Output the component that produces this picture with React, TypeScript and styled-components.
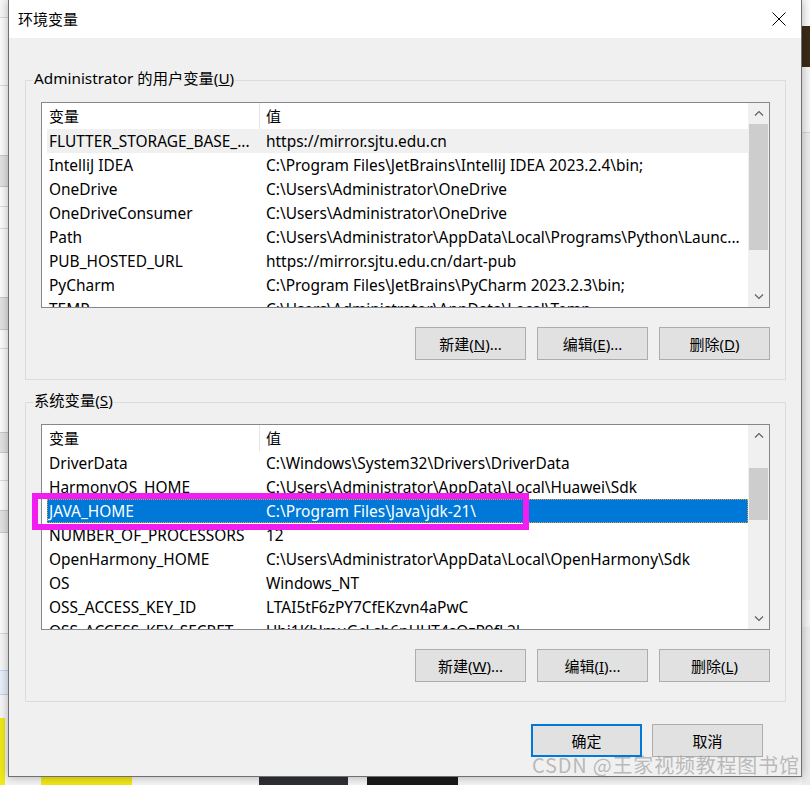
import React from "react";
import styled, { createGlobalStyle } from "styled-components";

const FONT = `"Noto Sans", "Noto Sans CJK SC", sans-serif`;

const GlobalStyle = createGlobalStyle`
  html, body { margin: 0; padding: 0; background: #f3f3f3; }
  body { font-family: ${FONT}; }
  * { box-sizing: border-box; }
`;

const Desktop = styled.div`
  position: relative;
  width: 810px;
  height: 785px;
  overflow: hidden;
  display: grid;
  grid-template-columns: 8px 794px 8px;
  grid-template-rows: 777px 8px;
  background: #f3f3f3;
  font-family: ${FONT};
`;

const LeftStrip = styled.div`
  grid-column: 1;
  grid-row: 1 / span 2;
  display: flex;
  flex-direction: column;
  overflow: hidden;
`;

const RightStrip = styled.div`
  grid-column: 3;
  grid-row: 1 / span 2;
  display: flex;
  flex-direction: column;
  overflow: hidden;
`;

const BottomStrip = styled.div`
  grid-column: 2;
  grid-row: 2;
  display: flex;
  overflow: hidden;
`;

const VSeg = styled.div<{ $h: number; $bg: string; $edge?: string }>`
  flex: none;
  height: ${(p) => p.$h}px;
  background: ${(p) => p.$bg};
  ${(p) => (p.$edge ? `border-top: 1px solid ${p.$edge}; border-bottom: 1px solid ${p.$edge};` : "")}
`;

const HSeg = styled.div<{ $w: number; $bg: string }>`
  flex: none;
  width: ${(p) => p.$w}px;
  background: ${(p) => p.$bg};
`;

const Dialog = styled.section`
  grid-column: 2;
  grid-row: 1;
  position: relative;
  z-index: 1;
  display: flex;
  flex-direction: column;
  background: #f0f0f0;
  border: 1px solid #707070;
  border-top: none;
  box-shadow: 0 0 9px rgba(0, 0, 0, 0.3);
`;

const TitleBar = styled.header`
  flex: none;
  height: 38px;
  background: #ffffff;
  display: flex;
  align-items: center;
  justify-content: space-between;
  padding-left: 9px;
`;

const Title = styled.span`
  font-size: 15px;
  color: #000;
  line-height: 20px;
`;

const CloseButton = styled.div`
  width: 44px;
  height: 38px;
  display: flex;
  align-items: center;
  justify-content: center;
`;

const Body = styled.div`
  flex: 1;
  display: flex;
  flex-direction: column;
  gap: 22px;
  padding: 42px 15px 0 16px;
`;

const GroupBox = styled.div`
  position: relative;
  border: 1px solid #dcdcdc;
  padding: 21px 15px 19px 15px;
  display: flex;
  flex-direction: column;
  gap: 19px;
`;

const GroupLabel = styled.span`
  position: absolute;
  top: -13px;
  left: 7px;
  padding: 0 1px;
  background: #f0f0f0;
  font-size: 15.3px;
  line-height: 20px;
  color: #000;
`;

const ListView = styled.div`
  height: 206px;
  flex: none;
  border: 1px solid #828790;
  background: #ffffff;
  display: flex;
  overflow: hidden;
`;

const ListContent = styled.div`
  flex: 1;
  min-width: 0;
  display: flex;
  flex-direction: column;
  overflow: hidden;
`;

const HeaderRow = styled.div`
  flex: none;
  height: 26px;
  display: grid;
  grid-template-columns: 217px 1fr;
`;

const HeaderCell = styled.div<{ $sep?: boolean }>`
  font-size: 15px;
  line-height: 26px;
  color: #000;
  padding-left: ${(p) => (p.$sep ? 6 : 7)}px;
  border-left: ${(p) => (p.$sep ? "1px solid #e5e5e5" : "none")};
  white-space: nowrap;
  overflow: hidden;
`;

type RowState = "normal" | "inactive" | "selected";

const Row = styled.div<{ $state: RowState }>`
  flex: none;
  height: 24px;
  margin-left: 5px;
  display: grid;
  grid-template-columns: 212px 1fr;
  background: ${(p) =>
    p.$state === "selected" ? "#0078d7" : p.$state === "inactive" ? "#f0f0f0" : "transparent"};
  color: ${(p) => (p.$state === "selected" ? "#ffffff" : "#000000")};
  outline: ${(p) => (p.$state === "selected" ? "1px dotted #e0a040" : "none")};
  outline-offset: -1px;
`;

const Cell = styled.div<{ $value?: boolean }>`
  font-size: 15.45px;
  line-height: 24px;
  padding-left: ${(p) => (p.$value ? 7 : 2)}px;
  white-space: nowrap;
  overflow: hidden;
`;

const ScrollBar = styled.div`
  flex: none;
  width: 21px;
  display: flex;
  flex-direction: column;
  background: #f0f0f0;
`;

const ScrollArrow = styled.div`
  flex: none;
  height: 21px;
  display: flex;
  align-items: center;
  justify-content: center;
`;

const ScrollTrack = styled.div`
  flex: 1;
  display: flex;
  flex-direction: column;
`;

const ScrollThumb = styled.div<{ $offset: number; $size: number }>`
  flex: none;
  margin: ${(p) => p.$offset}px 1px 0 1px;
  height: ${(p) => p.$size}px;
  background: #cdcdcd;
`;

const ButtonRow = styled.div<{ $gap: number }>`
  display: flex;
  justify-content: flex-end;
  gap: ${(p) => p.$gap}px;
`;

const Button = styled.button<{ $primary?: boolean }>`
  width: 111px;
  height: 33px;
  padding: 0;
  background: #e1e1e1;
  border: ${(p) => (p.$primary ? "2px solid #0078d7" : "1px solid #adadad")};
  font-family: ${FONT};
  font-size: 15px;
  color: #000;
  line-height: 20px;
`;

const Footer = styled.div`
  display: flex;
  justify-content: flex-end;
  gap: 10px;
  padding: 22px 38px 19px 0;
`;

const Annotation = styled.div`
  position: absolute;
  left: 32px;
  top: 493px;
  width: 497px;
  height: 37px;
  border: 6px solid #f21df0;
  z-index: 2;
  pointer-events: none;
`;

const Watermark = styled.div`
  position: absolute;
  left: 532px;
  top: 752px;
  z-index: 3;
  font-family: "Noto Sans CJK SC", sans-serif;
  font-size: 20px;
  line-height: 26px;
  letter-spacing: 0.8px;
  color: rgba(160, 160, 160, 0.7);
  white-space: nowrap;
`;

const Up = () => (
  <svg width="10" height="7" viewBox="0 0 10 7">
    <polyline points="1,5.5 5,1.5 9,5.5" fill="none" stroke="#606060" strokeWidth="1.2" />
  </svg>
);
const Down = () => (
  <svg width="10" height="7" viewBox="0 0 10 7">
    <polyline points="1,1.5 5,5.5 9,1.5" fill="none" stroke="#606060" strokeWidth="1.2" />
  </svg>
);

type Item = { name: string; value: string; state?: RowState };

const userVars: Item[] = [
  { name: "FLUTTER_STORAGE_BASE_...", value: "https://mirror.sjtu.edu.cn", state: "inactive" },
  { name: "IntelliJ IDEA", value: "C:\\Program Files\\JetBrains\\IntelliJ IDEA 2023.2.4\\bin;" },
  { name: "OneDrive", value: "C:\\Users\\Administrator\\OneDrive" },
  { name: "OneDriveConsumer", value: "C:\\Users\\Administrator\\OneDrive" },
  { name: "Path", value: "C:\\Users\\Administrator\\AppData\\Local\\Programs\\Python\\Launc..." },
  { name: "PUB_HOSTED_URL", value: "https://mirror.sjtu.edu.cn/dart-pub" },
  { name: "PyCharm", value: "C:\\Program Files\\JetBrains\\PyCharm 2023.2.3\\bin;" },
  { name: "TEMP", value: "C:\\Users\\Administrator\\AppData\\Local\\Temp" },
];

const sysVars: Item[] = [
  { name: "DriverData", value: "C:\\Windows\\System32\\Drivers\\DriverData" },
  { name: "HarmonyOS_HOME", value: "C:\\Users\\Administrator\\AppData\\Local\\Huawei\\Sdk" },
  { name: "JAVA_HOME", value: "C:\\Program Files\\Java\\jdk-21\\", state: "selected" },
  { name: "NUMBER_OF_PROCESSORS", value: "12" },
  { name: "OpenHarmony_HOME", value: "C:\\Users\\Administrator\\AppData\\Local\\OpenHarmony\\Sdk" },
  { name: "OS", value: "Windows_NT" },
  { name: "OSS_ACCESS_KEY_ID", value: "LTAI5tF6zPY7CfEKzvn4aPwC" },
  { name: "OSS_ACCESS_KEY_SECRET", value: "Uhi1KblmuGcLsb6nUHT4sQzP9fL2l" },
];

const VarList = ({ items, offset, size }: { items: Item[]; offset: number; size: number }) => (
  <ListView>
    <ListContent>
      <HeaderRow>
        <HeaderCell>变量</HeaderCell>
        <HeaderCell $sep>值</HeaderCell>
      </HeaderRow>
      {items.map((it) => (
        <Row key={it.name} $state={it.state ?? "normal"}>
          <Cell>{it.name}</Cell>
          <Cell $value>{it.value}</Cell>
        </Row>
      ))}
    </ListContent>
    <ScrollBar>
      <ScrollArrow>
        <Up />
      </ScrollArrow>
      <ScrollTrack>
        <ScrollThumb $offset={offset} $size={size} />
      </ScrollTrack>
      <ScrollArrow>
        <Down />
      </ScrollArrow>
    </ScrollBar>
  </ListView>
);

const leftSegs: [number, string, string?][] = [
  [17, "#f6f6f6"], [1, "#dadada"], [67, "#fbfbfb"], [1, "#dadada"], [69, "#fbfbfb"],
  [32, "#e2e2e2", "#c8c8c8"], [19, "#fbfbfb"], [1, "#dadada"], [21, "#fbfbfb"], [1, "#dadada"],
  [68, "#fbfbfb"], [33, "#e2e2e2", "#c8c8c8"], [18, "#fbfbfb"], [1, "#dadada"], [83, "#fbfbfb"],
  [21, "#e2e2e2", "#c8c8c8"], [27, "#fbfbfb"], [1, "#dadada"], [29, "#fbfbfb"],
  [23, "#e2e2e2", "#c8c8c8"], [100, "#fbfbfb"], [1, "#dadada"], [36, "#f6f6f6"],
  [25, "#e6effa", "#c4d6ee"], [23, "#f6f6f6"], [67, "linear-gradient(90deg,#efe81a 0 5px,#f4f4f4 5px)"],
];

const rightSegs: [number, string][] = [
  [26, "#fafafa"], [41, "#3a2b16"], [65, "#f4f4f4"], [1, "#d6d6d6"],
  [467, "#ececec"], [27, "#f4f4f4"], [158, "#ececec"],
];

const bottomSegs: [number, string][] = [
  [33, "#f3f3f3"], [91, "#f0e617"], [16, "#f5f5f5"], [92, "#f5f5f5"], [19, "#f3f3f3"],
  [89, "#2f3033"], [19, "#f3f3f3"], [91, "#1b1b1b"], [344, "#f3f3f3"],
];

export default function App() {
  return (
    <>
      <GlobalStyle />
      <Desktop>
        <LeftStrip>
          {leftSegs.map(([h, bg, edge], i) => (
            <VSeg key={i} $h={h} $bg={bg} $edge={edge} />
          ))}
        </LeftStrip>
        <Dialog>
          <TitleBar>
            <Title>环境变量</Title>
            <CloseButton>
              <svg width="14" height="14" viewBox="0 0 14 14">
                <line x1="0.5" y1="0.5" x2="13.5" y2="13.5" stroke="#000" strokeWidth="1" />
                <line x1="13.5" y1="0.5" x2="0.5" y2="13.5" stroke="#000" strokeWidth="1" />
              </svg>
            </CloseButton>
          </TitleBar>
          <Body>
            <GroupBox>
              <GroupLabel>
                Administrator 的用户变量(<u>U</u>)
              </GroupLabel>
              <VarList items={userVars} offset={0} size={126} />
              <ButtonRow $gap={11}>
                <Button>
                  新建(<u>N</u>)...
                </Button>
                <Button>
                  编辑(<u>E</u>)...
                </Button>
                <Button>
                  删除(<u>D</u>)
                </Button>
              </ButtonRow>
            </GroupBox>
            <GroupBox>
              <GroupLabel>
                系统变量(<u>S</u>)
              </GroupLabel>
              <VarList items={sysVars} offset={22} size={52} />
              <ButtonRow $gap={11}>
                <Button>
                  新建(<u>W</u>)...
                </Button>
                <Button>
                  编辑(<u>I</u>)...
                </Button>
                <Button>
                  删除(<u>L</u>)
                </Button>
              </ButtonRow>
            </GroupBox>
          </Body>
          <Footer>
            <Button $primary>确定</Button>
            <Button>取消</Button>
          </Footer>
        </Dialog>
        <RightStrip>
          {rightSegs.map(([h, bg], i) => (
            <VSeg key={i} $h={h} $bg={bg} />
          ))}
        </RightStrip>
        <BottomStrip>
          {bottomSegs.map(([w, bg], i) => (
            <HSeg key={i} $w={w} $bg={bg} />
          ))}
        </BottomStrip>
        <Annotation />
        <Watermark>CSDN @王家视频教程图书馆</Watermark>
      </Desktop>
    </>
  );
}
